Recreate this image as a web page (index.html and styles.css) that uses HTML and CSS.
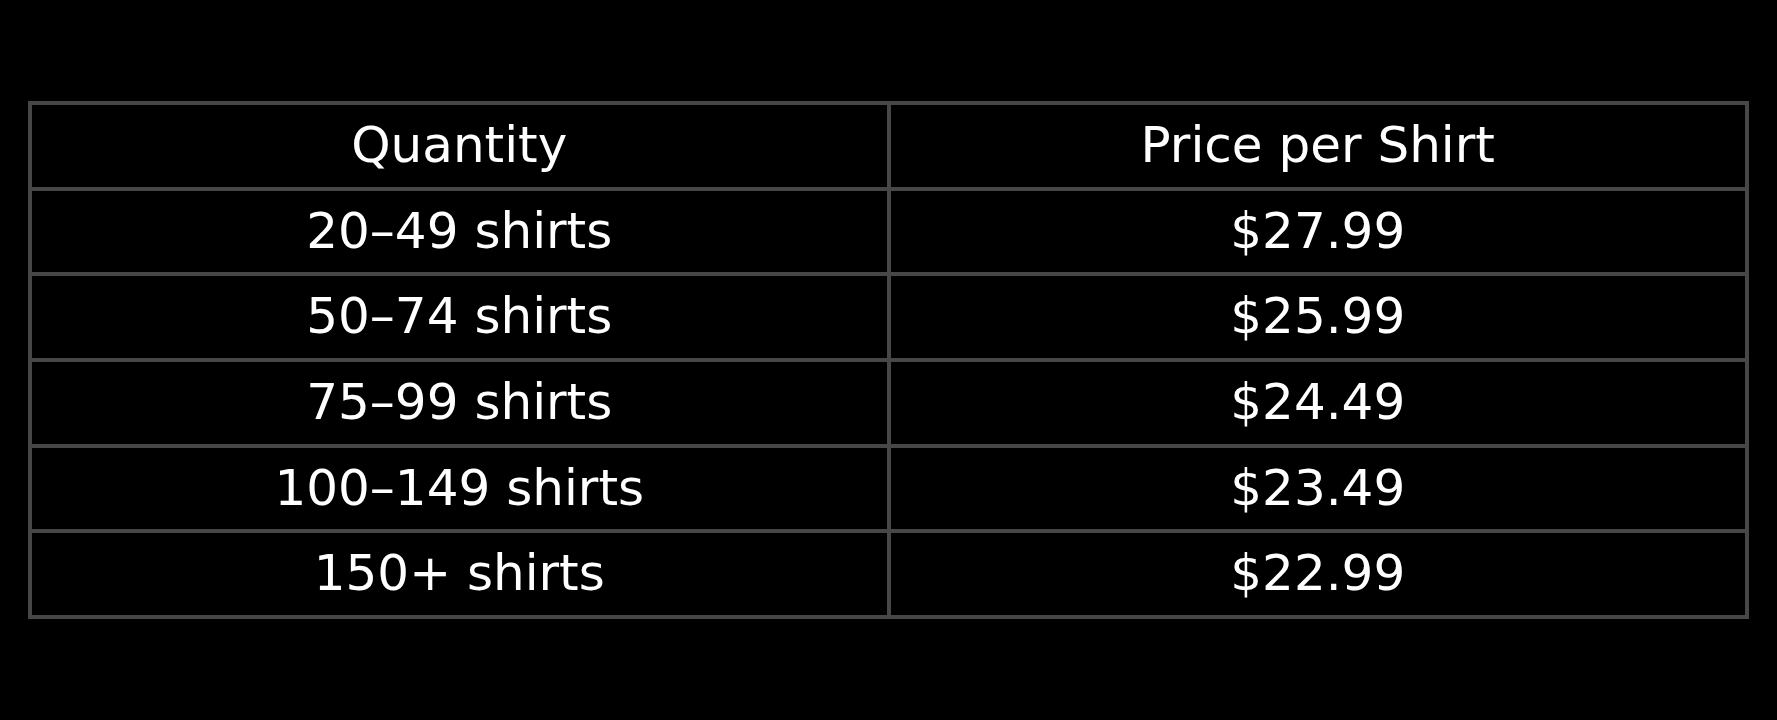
FILE: index.html
```html
<!DOCTYPE html>
<html lang="en">
<head>
<meta charset="utf-8">
<title>Pricing</title>
<link rel="stylesheet" href="styles.css">
</head>
<body>
<table class="price-table">
  <thead>
    <tr><th>Quantity</th><th>Price per Shirt</th></tr>
  </thead>
  <tbody>
    <tr><td>20–49 shirts</td><td>$27.99</td></tr>
    <tr><td>50–74 shirts</td><td>$25.99</td></tr>
    <tr><td>75–99 shirts</td><td>$24.49</td></tr>
    <tr><td>100–149 shirts</td><td>$23.49</td></tr>
    <tr><td>150+ shirts</td><td>$22.99</td></tr>
  </tbody>
</table>
</body>
</html>
```
FILE: styles.css
```css
html, body {
  margin: 0;
  padding: 0;
  background: #000;
}
body {
  padding: 101px 28px 0;
  font-family: "DejaVu Sans", sans-serif;
  color: #fff;
}
.price-table {
  width: 1721px;
  border-collapse: separate;
  border-spacing: 4px;
  background: #474747;
  table-layout: fixed;
}
.price-table th,
.price-table td {
  background: #000;
  height: 81.7px;
  padding: 0 0 2px;
  box-sizing: border-box;
  text-align: center;
  vertical-align: middle;
  font-size: 50px;
  font-weight: normal;
  line-height: 1.16;
}
```
